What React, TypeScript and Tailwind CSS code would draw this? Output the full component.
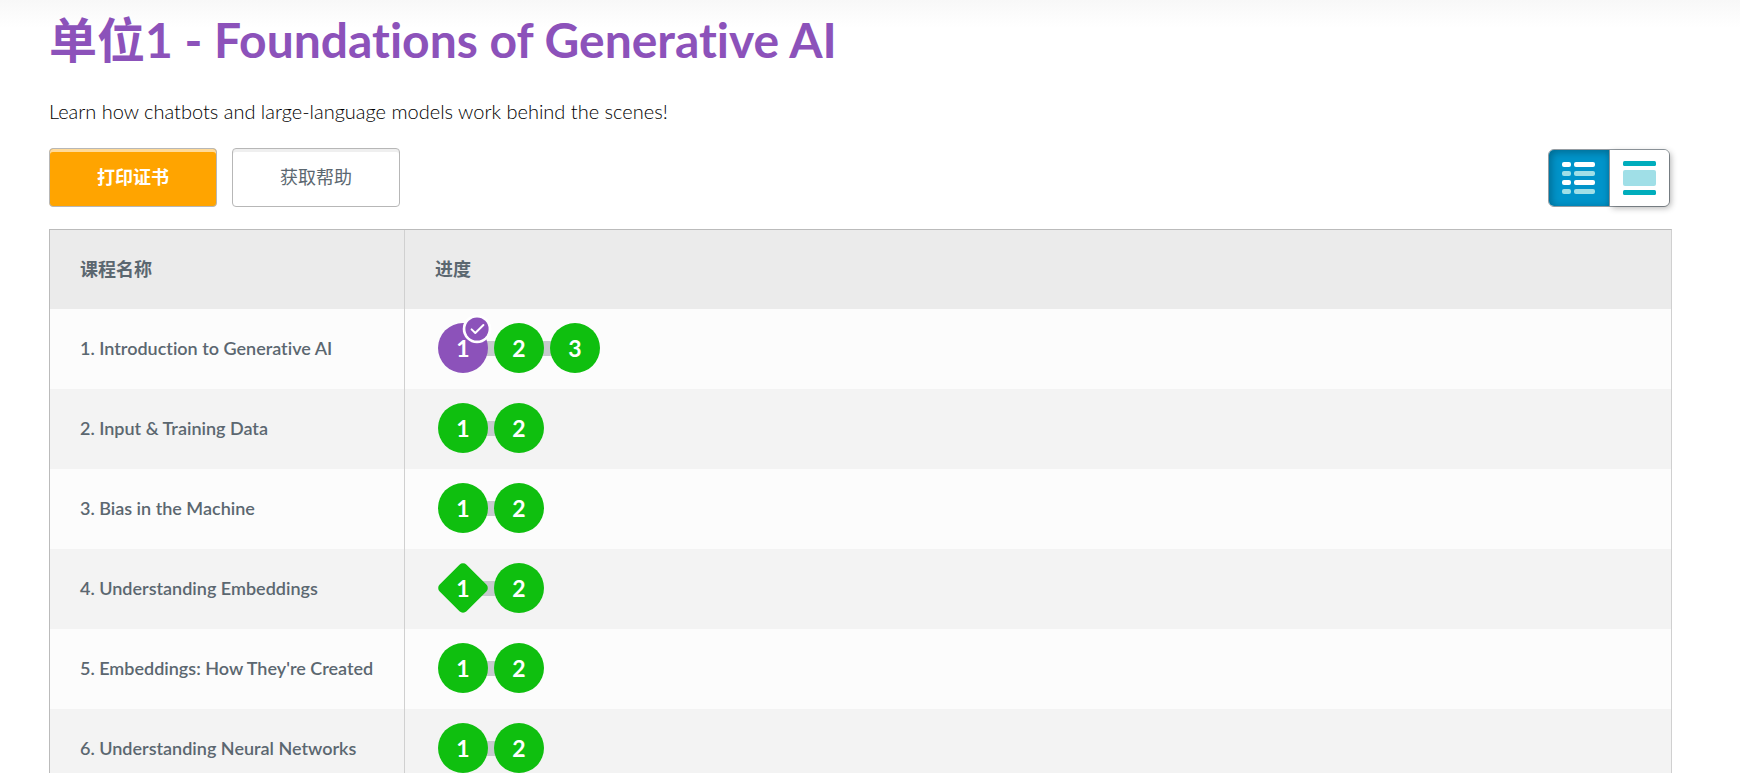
import clsx from "clsx";

type BubbleKind = "circle" | "diamond";

interface Level {
  label: string;
  kind?: BubbleKind;
  assessment?: boolean;
}

interface Lesson {
  id: number;
  name: string;
  levels: Level[];
}

const lessons: Lesson[] = [
  {
    id: 1,
    name: "Introduction to Generative AI",
    levels: [{ label: "1", assessment: true }, { label: "2" }, { label: "3" }],
  },
  {
    id: 2,
    name: "Input & Training Data",
    levels: [{ label: "1" }, { label: "2" }],
  },
  {
    id: 3,
    name: "Bias in the Machine",
    levels: [{ label: "1" }, { label: "2" }],
  },
  {
    id: 4,
    name: "Understanding Embeddings",
    levels: [{ label: "1", kind: "diamond" }, { label: "2" }],
  },
  {
    id: 5,
    name: "Embeddings: How They're Created",
    levels: [{ label: "1" }, { label: "2" }],
  },
  {
    id: 6,
    name: "Understanding Neural Networks",
    levels: [{ label: "1" }, { label: "2" }],
  },
];

function AssessmentBadge() {
  return (
    <svg
      viewBox="0 0 30 30"
      className="absolute -top-[9px] left-[24px] size-[30px]"
      aria-hidden="true"
    >
      <circle cx="15" cy="15" r="14.3" fill="#fff" />
      <circle cx="15" cy="15" r="11.6" fill="#8c52ba" />
      <path
        d="M9.6 15.4 L13.3 19 L21.4 11"
        fill="none"
        stroke="#fff"
        strokeWidth="2"
        strokeLinecap="round"
        strokeLinejoin="round"
      />
    </svg>
  );
}

function Bubble({ label, kind = "circle", assessment }: Level) {
  return (
    <a
      href="#"
      className="relative flex size-[50px] items-center justify-center text-[23px] leading-none font-bold text-white"
    >
      <span
        className={clsx(
          "absolute",
          kind === "diamond"
            ? "inset-[6px] rotate-45 rounded-[5px]"
            : "inset-0 rounded-full",
          assessment ? "bg-[#8c52ba]" : "bg-[#0fbf0f]"
        )}
      />
      <span className="relative">{label}</span>
      {assessment && <AssessmentBadge />}
    </a>
  );
}

function LevelProgress({ levels }: { levels: Level[] }) {
  return (
    <div className="flex items-center">
      {levels.map((level, index) => (
        <div key={level.label} className="flex items-center">
          {index > 0 && <span className="-mx-2 h-[15px] w-[22px] bg-[#c6cacd]" />}
          <Bubble {...level} />
        </div>
      ))}
    </div>
  );
}

function ViewToggle() {
  return (
    <div className="mr-[2px] flex h-[58px] w-[122px] rounded-md border border-[#949ca2]">
      <button
        type="button"
        aria-label="Summary view"
        aria-pressed="true"
        className="flex flex-1 items-center justify-center rounded-l-[5px] border-r border-[#949ca2] bg-[#0094ca] shadow-[inset_2px_2px_8px_rgba(0,0,0,0.3)]"
      >
        <svg viewBox="0 0 33 32" className="h-[32px] w-[33px]">
          <rect x="0" y="0" width="9" height="5" rx="2" fill="#fff" />
          <rect x="12" y="0" width="21" height="5" rx="2" fill="#fff" />
          <rect x="0" y="9" width="9" height="5" rx="2" fill="#a0dfe7" />
          <rect x="12" y="9" width="21" height="5" rx="2" fill="#a0dfe7" />
          <rect x="0" y="18" width="9" height="5" rx="2" fill="#fff" />
          <rect x="12" y="18" width="21" height="5" rx="2" fill="#fff" />
          <rect x="0" y="27" width="9" height="5" rx="2" fill="#a0dfe7" />
          <rect x="12" y="27" width="21" height="5" rx="2" fill="#a0dfe7" />
        </svg>
      </button>
      <button
        type="button"
        aria-label="Detail view"
        aria-pressed="false"
        className="flex flex-1 items-center justify-center rounded-r-[5px] bg-white shadow-[2px_2px_6px_rgba(0,0,0,0.3)]"
      >
        <svg viewBox="0 0 33 34" className="h-[34px] w-[33px]">
          <rect x="0" y="0" width="33" height="5" rx="1.5" fill="#00adbc" />
          <rect x="0" y="9" width="33" height="16" rx="2" fill="#a0dfe7" />
          <rect x="0" y="29" width="33" height="5" rx="1.5" fill="#00adbc" />
        </svg>
      </button>
    </div>
  );
}

function App() {
  return (
    <div className="min-h-screen bg-white font-['Lato','Noto_Sans_CJK_SC',sans-serif] [font-variant-ligatures:none]">
      <main className="bg-linear-to-b from-[#f8f8f8] to-white to-[28px] pr-[68px] pl-[49px]">
        <h1 className="pt-[10px] text-[48px] leading-[60px] font-bold text-[#8c52ba]">
          单位1 - Foundations of Generative AI
        </h1>
        <p className="pt-[26px] text-[20px] leading-[30px] font-light text-black">
          Learn how chatbots and large-language models work behind the scenes!
        </p>

        <div className="flex items-center justify-between pt-[22px]">
          <div className="flex gap-[15px]">
            <button
              type="button"
              className="h-[59px] w-[168px] rounded border border-[#b7b7b7] bg-[#ffa400] text-[18px] font-bold text-white shadow-[inset_0_3px_0_rgba(255,255,255,0.6)]"
            >
              打印证书
            </button>
            <button
              type="button"
              className="h-[59px] w-[168px] rounded border border-[#b7b7b7] bg-white text-[18px] text-[#5b6770] shadow-[inset_0_3px_0_#efefef]"
            >
              获取帮助
            </button>
          </div>
          <ViewToggle />
        </div>

        <table className="mt-[22px] w-full table-fixed border-separate border-spacing-0 border border-t-[#bbb] border-r-[#d0d0d0] border-l-[#bbb] text-left text-[18px] text-[#5b6770]">
          <thead>
            <tr className="h-[79px] bg-[#ebebeb]">
              <th className="w-[355px] border-r border-[#d0d0d0] px-[30px] font-semibold">
                课程名称
              </th>
              <th className="px-[30px] font-semibold">进度</th>
            </tr>
          </thead>
          <tbody>
            {lessons.map((lesson) => (
              <tr
                key={lesson.id}
                className="h-[80px] odd:bg-[#fcfcfc] even:bg-[#f3f3f3]"
              >
                <td className="border-r border-[#d0d0d0] pb-0.5 pl-[30px] font-semibold whitespace-nowrap">
                  {lesson.id}. {lesson.name}
                </td>
                <td className="px-[33px] pb-0.5">
                  <LevelProgress levels={lesson.levels} />
                </td>
              </tr>
            ))}
          </tbody>
        </table>
      </main>
    </div>
  );
}

export default App;
